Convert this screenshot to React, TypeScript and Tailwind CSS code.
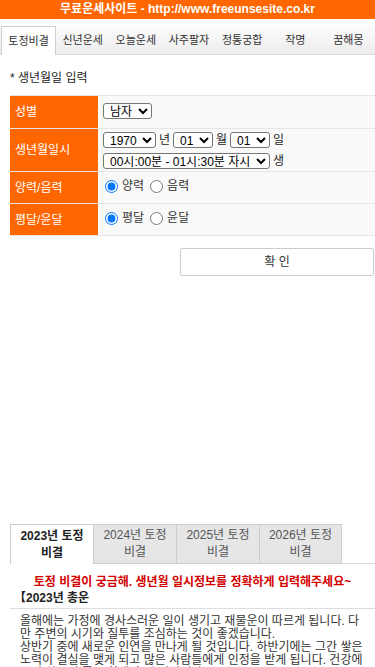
import { useState } from "react";

const FONT = "font-['Liberation_Sans','Noto_Sans_CJK_KR',sans-serif]";

const topTabs = ["토정비결", "신년운세", "오늘운세", "사주팔자", "정통궁합", "작명", "꿈해몽"];
const yearTabs = ["2023년 토정비결", "2024년 토정비결", "2025년 토정비결", "2026년 토정비결"];

const selectCls =
  "h-[16px] border border-[#767676] rounded-[3px] bg-white px-[2px] text-[12px] leading-[14px] text-black";

export default function App() {
  const [tab, setTab] = useState(0);
  const [yearTab, setYearTab] = useState(0);

  return (
    <div className={`${FONT} w-[375px] min-h-[667px] overflow-hidden bg-white text-[#222]`}>
      {/* Header */}
      <header className="h-[19px] bg-[#ff6600] text-center text-[12px] font-bold leading-[19px] text-white">
        무료운세사이트 - http://www.freeunsesite.co.kr
      </header>

      {/* Top tabs */}
      <nav className="flex h-[36px] items-end border-b border-[#dcdcdc] bg-gradient-to-b from-white to-[#ededed] pl-px">
        {topTabs.map((t, i) => (
          <button
            key={t}
            onClick={() => setTab(i)}
            className={`h-[28px] flex-1 text-center text-[11px] leading-[28px] text-[#333] ${
              tab === i ? "-mb-px h-[29px] border border-b-0 border-[#cfcfcf] bg-white" : ""
            }`}
          >
            {t}
          </button>
        ))}
      </nav>

      <div className="pl-[10px]">
        <p className="mt-[16px] text-[12px] leading-[14px]">* 생년월일 입력</p>

        {/* Form */}
        <table className="mt-[10px] w-[400px] border-collapse text-[12px]">
          <tbody>
            <tr className="h-[33px] border-y border-[#e6e6e6]">
              <th className="w-[88px] bg-[#ff6600] pl-[5px] text-left font-normal text-white">성별</th>
              <td className="bg-[#f9f9f9] pl-[5px]">
                <select className={selectCls} defaultValue="m">
                  <option value="m">남자</option>
                  <option value="f">여자</option>
                </select>
              </td>
            </tr>
            <tr className="h-[43px] border-b border-[#e6e6e6]">
              <th className="bg-[#ff6600] pl-[5px] text-left font-normal text-white">생년월일시</th>
              <td className="bg-[#f9f9f9] pl-[5px]">
                <div className="flex items-center gap-[3px]">
                  <select className={selectCls} defaultValue="1970">
                    <option>1970</option>
                  </select>
                  <span>년</span>
                  <select className={selectCls} defaultValue="01">
                    <option>01</option>
                  </select>
                  <span>월</span>
                  <select className={selectCls} defaultValue="01">
                    <option>01</option>
                  </select>
                  <span>일</span>
                </div>
                <div className="mt-[3px] flex items-center gap-[3px]">
                  <select className={selectCls}>
                    <option>00시:00분 - 01시:30분 자시</option>
                  </select>
                  <span>생</span>
                </div>
              </td>
            </tr>
            <tr className="h-[32px] border-b border-[#e6e6e6]">
              <th className="bg-[#ff6600] pl-[5px] text-left font-normal text-white">양력/음력</th>
              <td className="bg-[#f9f9f9] pl-[5px]">
                <label className="inline-flex items-center gap-[4px] text-[#333]">
                  <input type="radio" name="cal" defaultChecked className="m-0 ml-[2px] h-[13px] w-[13px]" />
                  양력
                </label>
                <label className="ml-[6px] inline-flex items-center gap-[4px] text-[#333]">
                  <input type="radio" name="cal" className="m-0 h-[13px] w-[13px]" />
                  음력
                </label>
              </td>
            </tr>
            <tr className="h-[32px] border-b border-[#e6e6e6]">
              <th className="bg-[#ff6600] pl-[5px] text-left font-normal text-white">평달/윤달</th>
              <td className="bg-[#f9f9f9] pl-[5px]">
                <label className="inline-flex items-center gap-[4px] text-[#333]">
                  <input type="radio" name="leap" defaultChecked className="m-0 ml-[2px] h-[13px] w-[13px]" />
                  평달
                </label>
                <label className="ml-[6px] inline-flex items-center gap-[4px] text-[#333]">
                  <input type="radio" name="leap" className="m-0 h-[13px] w-[13px]" />
                  윤달
                </label>
              </td>
            </tr>
          </tbody>
        </table>

        <div className="mt-[12px] flex justify-end pr-px">
          <button className="h-[28px] w-[194px] rounded-[2px] border border-[#cccccc] bg-white text-[12px] text-[#333]">
            확 인
          </button>
        </div>

        {/* ad area */}
        <div className="h-[248px]" />

        {/* Year tabs */}
        <div className="flex">
          {yearTabs.map((t, i) => (
            <button
              key={t}
              onClick={() => setYearTab(i)}
              className={`w-[83px] border-t border-l border-[#cccccc] px-[4px] pt-[2px] pb-[2px] text-center text-[12px] leading-[17px] ${
                i === yearTabs.length - 1 ? "border-r" : ""
              } ${
                yearTab === i
                  ? "bg-white font-bold text-[#222]"
                  : "border-b bg-[#e6e6e6] text-[#555]"
              }`}
            >
              {t}
            </button>
          ))}
          <div className="flex-1 border-b border-[#dddddd]" />
        </div>

        <p className="mt-[11px] text-center text-[12px] font-bold leading-[14px] text-[#d40000]">
          토정 비결이 궁금해. 생년월 일시정보를 정확하게 입력해주세요~
        </p>

        <p className="mt-[2px] pl-[4px] text-[12px] font-bold leading-[14px] text-[#222]">【2023년 총운</p>
        <div className="mt-[3px] border-b border-[#dddddd]" />

        <div className="mt-[6px] pl-[10px] pr-[8px] text-[12px] leading-[13px] text-[#333]">
          <p>
            올해에는 가정에 경사스러운 일이 생기고 재물운이 따르게 됩니다. 다만 주변의 시기와 질투를 조심하는 것이 좋겠습니다.
          </p>
          <p>
            상반기 중에 새로운 인연을 만나게 될 것입니다. 하반기에는 그간 쌓은 노력이 결실을 맺게 되고 많은 사람들에게 인정을 받게 됩니다. 건강에 유의
            하시면 좋은 한해가 될 것입니다.
          </p>
        </div>
      </div>
    </div>
  );
}
